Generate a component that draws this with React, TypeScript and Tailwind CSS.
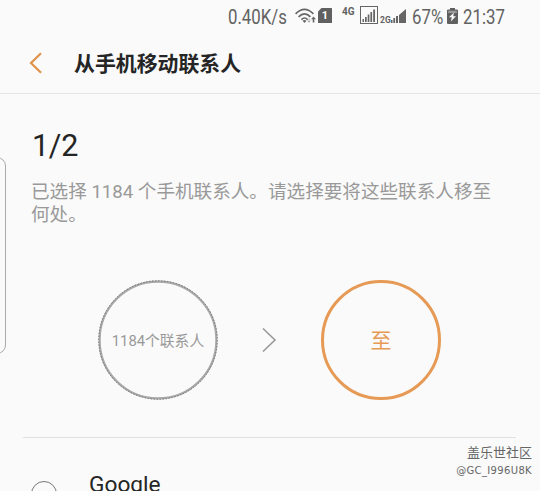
import type { ReactNode } from "react";

const WifiIcon = () => (
  <svg className="h-[17px] w-[22px] shrink-0" viewBox="0 0 22 17" fill="none">
    <g stroke="#666" strokeWidth="1.7">
      <path d="M0.6 5.8 Q9.5 -3 18.4 5.8" />
      <path d="M3.6 8.8 Q9.5 2.8 15.4 8.8" />
      <path d="M6.4 11.6 Q9.5 8.4 12.6 11.6" />
    </g>
    <path d="M7.5 12.8 L9.5 15 L11.5 12.8 Q9.5 11.3 7.5 12.8Z" fill="#666" />
    <path d="M14 10.5 V14 M12.6 12.7 L14 14.3 L15.4 12.7" stroke="#aaa" />
    <path d="M18.5 8.5 L21 11.3 H19.3 V14.5 H17.7 V11.3 H16Z" fill="#666" />
  </svg>
);

const SimIcon = () => (
  <div className="relative flex h-[15px] w-[14px] shrink-0 items-center justify-center">
    <svg className="absolute inset-0 h-full w-full" viewBox="0 0 14 15">
      <path d="M3.5 0 H13.5 Q14 0 14 0.5 V14.5 Q14 15 13.5 15 H0.5 Q0 15 0 14.5 V3.5Z" fill="#606060" />
    </svg>
    <span className="relative font-['Roboto'] text-[11px] leading-none font-bold text-white">
      1
    </span>
  </div>
);

const SignalBoxIcon = () => (
  <svg className="h-[18px] w-[18px] shrink-0" viewBox="0 0 18 18">
    <rect x="0.5" y="0.5" width="17" height="17" fill="none" stroke="#666" />
    <g fill="#666">
      <rect x="2.5" y="13" width="1.5" height="3" />
      <rect x="5" y="11" width="1.7" height="5" />
      <rect x="7.7" y="8.5" width="1.7" height="7.5" />
      <rect x="10.4" y="6" width="1.7" height="10" />
      <rect x="13.2" y="3.5" width="1.8" height="12.5" />
    </g>
  </svg>
);

const SignalIcon = () => (
  <svg className="h-[14px] w-[15px] shrink-0" viewBox="0 0 15 14" fill="#666">
    <rect x="0" y="11" width="1.5" height="3" />
    <rect x="2.3" y="9" width="1.8" height="5" />
    <rect x="5" y="7" width="2" height="7" />
    <path d="M8 6 L15 0 V14 H8Z" />
  </svg>
);

const BatteryIcon = () => (
  <svg className="h-[16px] w-[11px] shrink-0" viewBox="0 0 11 16">
    <path d="M3 0 H8 V1.5 H10 Q11 1.5 11 2.5 V15 Q11 16 10 16 H1 Q0 16 0 15 V2.5 Q0 1.5 1 1.5 H3Z" fill="#606060" />
    <rect x="1.2" y="2.7" width="8.6" height="2.3" fill="#999" />
    <path d="M7 4.5 L2 9.3 H4.8 L3.8 13.4 L9 8.2 H6.2Z" fill="#fafafa" />
  </svg>
);

// narrow status bar lettering
const StatusText = ({ className, children }: { className: string; children: ReactNode }) => (
  <div className={`shrink-0 ${className}`}>
    <span className="inline-block origin-left scale-x-[0.84] whitespace-nowrap text-[20px] leading-[22px]">
      {children}
    </span>
  </div>
);

const StatusBar = () => (
  <div className="flex h-8 pl-[228px] font-['Roboto'] text-[#626262]">
    <StatusText className="mt-[6px] w-[67px]">0.40K/s</StatusText>
    <div className="mt-[8px] w-[23px]">
      <WifiIcon />
    </div>
    <div className="mt-[8px] w-[24px]">
      <SimIcon />
    </div>
    <span className="mt-[7px] w-[18px] text-[10px] leading-[10px] font-bold">4G</span>
    <div className="mt-[6px] w-[20px]">
      <SignalBoxIcon />
    </div>
    <span className="mt-[16px] w-[11px] text-[8.5px] leading-[8px] font-bold">2G</span>
    <div className="mt-[9px] w-[21px]">
      <SignalIcon />
    </div>
    <StatusText className="mt-[6px] w-[35px]">67%</StatusText>
    <div className="mt-[8px] w-[16px]">
      <BatteryIcon />
    </div>
    <StatusText className="mt-[6px] w-[50px]">21:37</StatusText>
  </div>
);

const Header = () => (
  <header className="flex h-[62px] items-center border-b border-[#e6e6e6] pl-[29px]">
    <svg className="mt-px h-[22px] w-[14px]" viewBox="0 0 14 22" fill="none" stroke="#e09248" strokeWidth="2.2">
      <path d="M12 1.2 L2 11 L12 20.8" />
    </svg>
    <h1 className="mt-[5px] ml-[31px] text-[20.9px] font-bold text-[#252525]">从手机移动联系人</h1>
  </header>
);

export default function App() {
  return (
    <div className="relative h-[491px] w-[540px] overflow-hidden bg-[#fafafa] font-['Roboto','Noto_Sans_CJK_SC',sans-serif]">
      <StatusBar />
      <Header />

      <main>
        <section className="pl-[31px] pt-[33px]">
          <p className="ml-px text-[30.5px] leading-[37px] tracking-[-0.3px] text-[#252525]">1/2</p>
          <p className="mt-[17px] text-[18.6px] leading-[23px] whitespace-nowrap text-[#999]">
            已选择 1184 个手机联系人。请选择要将这些联系人移至
            <br />
            何处。
          </p>
        </section>

        <section className="mt-[53px] flex items-center pl-[98px]">
          <div className="relative flex h-[120px] w-[120px] items-center justify-center">
            <svg className="absolute inset-0 h-full w-full" viewBox="0 0 120 120" fill="none">
              <circle cx="60" cy="60" r="58.4" stroke="#a8a8a8" strokeWidth="2.2" />
              <circle cx="60" cy="60" r="59.3" stroke="#666" strokeWidth="0.8" strokeDasharray="1.5 1.5" />
            </svg>
            <span className="relative mt-[3px] text-[14.8px] whitespace-nowrap text-[#999]">
              1184个联系人
            </span>
          </div>
          <svg className="ml-[44px] h-[26px] w-[15px]" viewBox="0 0 15 26" fill="none" stroke="#999" strokeWidth="1.6">
            <path d="M1 1.5 L13 13 L1 24.5" />
          </svg>
          <div className="ml-[44px] flex h-[120px] w-[120px] items-center justify-center rounded-full border-[3px] border-[#e69a55]">
            <span className="mt-[4px] text-[21px] text-[#e69a55]">至</span>
          </div>
        </section>

        <div className="mt-[37px] ml-[23px] w-[493px] border-t border-[#e2e2e2]" />

        <div className="flex items-start pl-[31px]">
          <span className="mt-[43px] h-[26px] w-[26px] rounded-full border-[1.5px] border-[#777]" />
          <span className="mt-[32px] ml-8 text-[22.7px] leading-[30px] text-[#252525]">Google</span>
        </div>
      </main>

      {/* edge panel handle */}
      <div className="absolute top-[157px] -left-5 h-[197px] w-[26px] rounded-[9px] border border-[#aaa]" />

      <div className="absolute right-[8px] bottom-[12px] flex flex-col items-end text-[#666]">
        <span className="text-[13px] leading-[19px]">盖乐世社区</span>
        <span className="font-['DejaVu_Sans'] text-[10px] leading-[17px] tracking-[0.35px]">@GC_I996U8K</span>
      </div>
    </div>
  );
}
